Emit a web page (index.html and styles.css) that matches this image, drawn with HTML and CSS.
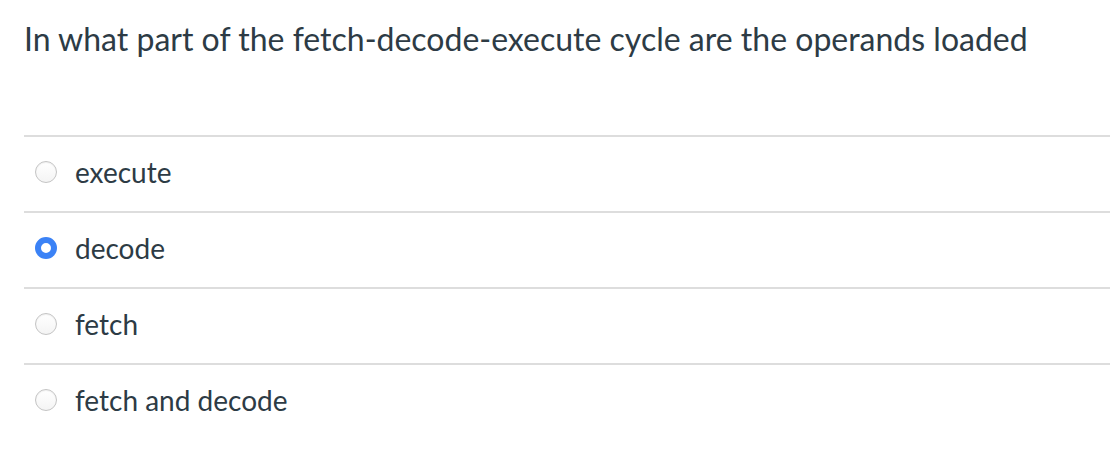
FILE: index.html
```html
<!DOCTYPE html>
<html>
<head>
<meta charset="utf-8">
<link rel="stylesheet" href="styles.css">
</head>
<body>
<div class="question">
  <h1 class="question-text">In what part of the fetch-decode-execute cycle are the operands loaded</h1>
  <div class="answers">
    <label class="answer"><span class="radio"></span><span class="answer-text">execute</span></label>
    <label class="answer"><span class="radio checked"></span><span class="answer-text">decode</span></label>
    <label class="answer"><span class="radio"></span><span class="answer-text">fetch</span></label>
    <label class="answer"><span class="radio"></span><span class="answer-text">fetch and decode</span></label>
  </div>
</div>
</body>
</html>
```
FILE: styles.css
```css
html, body {
  margin: 0;
  padding: 0;
  background: #ffffff;
}
body {
  font-family: Lato, "Liberation Sans", sans-serif;
  color: #2d3b45;
}
.question {
  padding: 20px 0 0 24px;
}
.question-text {
  margin: 0;
  font-size: 32px;
  font-weight: 400;
  line-height: 38px;
}
.answers {
  margin-top: 77px;
}
.answer {
  display: flex;
  align-items: center;
  box-sizing: border-box;
  height: 76px;
  padding-bottom: 4px;
  border-top: 2px solid #dddddd;
  padding-left: 11px;
  gap: 18px;
}
.radio {
  box-sizing: border-box;
  width: 22px;
  height: 22px;
  border-radius: 50%;
  border: 1px solid #c4c4c4;
  background: linear-gradient(#ffffff, #f4f4f4);
  box-shadow: inset 0 1px 1px rgba(0,0,0,0.06);
  flex: none;
}
.radio.checked {
  border: 6px solid #3b82f6;
  background: #ffffff;
  box-shadow: none;
}
.answer-text {
  font-size: 28px;
  line-height: 34px;
}
```
